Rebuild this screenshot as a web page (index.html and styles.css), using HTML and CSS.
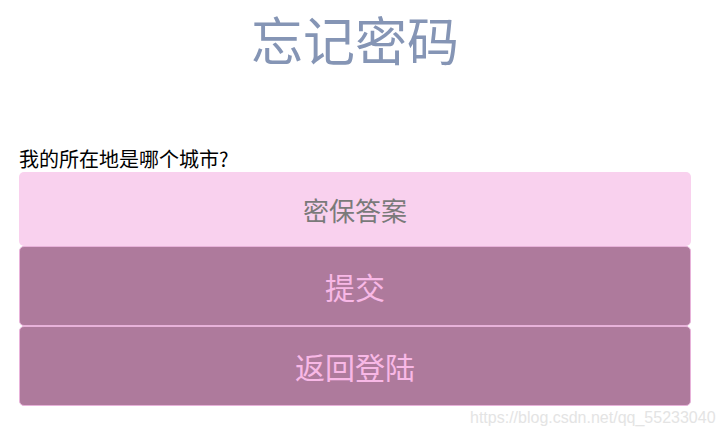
FILE: index.html
```html
<!DOCTYPE html>
<html lang="zh">
<head>
<meta charset="utf-8">
<title>忘记密码</title>
<link rel="stylesheet" href="styles.css">
</head>
<body>
<div class="wrap">
  <h1 class="title">忘记密码</h1>
  <div class="label">我的所在地是哪个城市?</div>
  <input class="answer" type="text" placeholder="密保答案">
  <button class="btn">提交</button>
  <button class="btn">返回登陆</button>
</div>
<div class="watermark">https://blog.csdn.net/qq_55233040</div>
</body>
</html>
```

FILE: styles.css
```css
html, body {
  margin: 0;
  padding: 0;
  background: #ffffff;
  font-family: "Noto Sans CJK SC", "Noto Sans", sans-serif;
}
.wrap {
  width: 672px;
  margin-left: 19px;
  display: flex;
  flex-direction: column;
}
.title {
  margin: 5px 0 0 0;
  height: 141px;
  text-align: center;
  font-size: 52px;
  font-weight: normal;
  line-height: 68px;
  color: #8595b5;
}
.label {
  font-size: 20px;
  line-height: 26px;
  color: #000;
  height: 26px;
}
.answer {
  box-sizing: border-box;
  width: 672px;
  height: 74px;
  margin: 0;
  border: none;
  border-radius: 5px;
  background: #f9d1ee;
  text-align: center;
  font-family: "Noto Sans CJK SC", sans-serif;
  font-size: 26px;
  color: #777;
  outline: none;
}
.answer::placeholder {
  color: #7a7a7a;
}
.btn {
  box-sizing: border-box;
  width: 672px;
  height: 80px;
  margin: 0;
  border: 1px solid #e8b2da;
  border-radius: 5px;
  background: #ae7a9c;
  color: #f8b8e6;
  font-family: "Noto Sans CJK SC", sans-serif;
  font-size: 30px;
}
.watermark {
  position: absolute;
  left: 470px;
  top: 409px;
  font-family: "Liberation Sans", Arial, sans-serif;
  font-size: 16px;
  color: #e4e4e4;
}
```
